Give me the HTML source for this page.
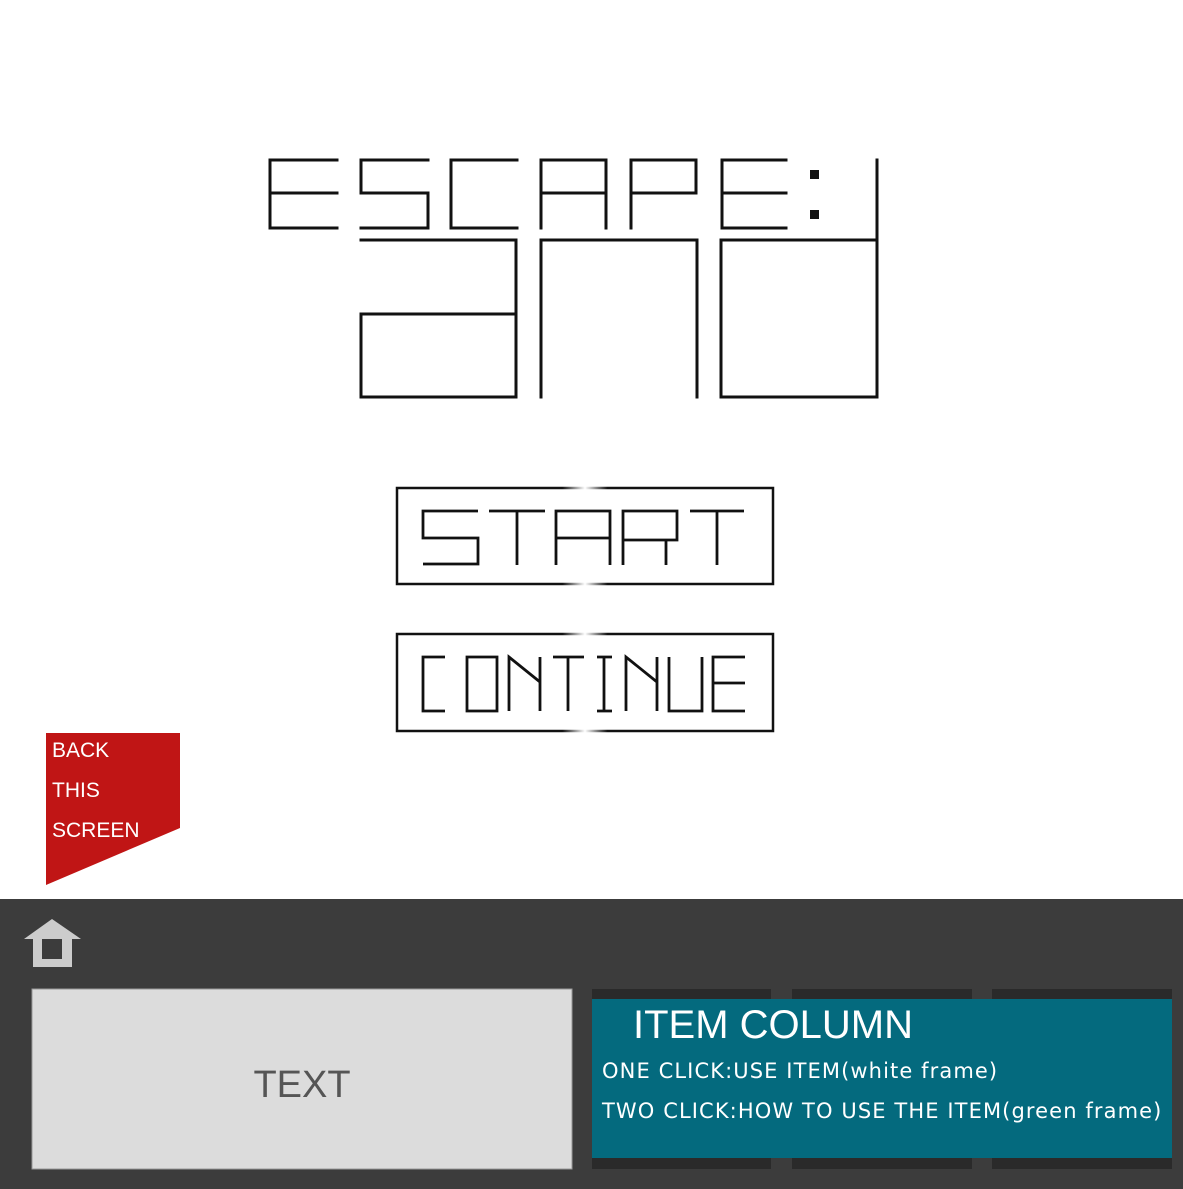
<!DOCTYPE html>
<html><head><meta charset="utf-8"><style>
html,body{margin:0;padding:0;width:1183px;height:1189px;overflow:hidden;background:#fff;font-family:"Liberation Sans","DejaVu Sans",sans-serif}
.abs{position:absolute}
</style></head><body>
<svg class="abs" style="left:0;top:0" width="1183" height="1189" viewBox="0 0 1183 1189">
<defs>
<linearGradient id="sh" x1="0" x2="1" y1="0" y2="0">
<stop offset="0" stop-color="#111"/><stop offset="0.44" stop-color="#111"/><stop offset="0.5" stop-color="#fff"/><stop offset="0.56" stop-color="#111"/><stop offset="1" stop-color="#111"/>
</linearGradient>
</defs>
<g fill="none" stroke="#111" stroke-width="3" stroke-linecap="square">
<path d="M337 160H270V228H337M270 193H337"/>
<path d="M428 160H361V193H428V228H361"/>
<path d="M517 160H451V228H517"/>
<path d="M541 228V160H606V228M541 193H606"/>
<path d="M631 228V160H696V193H631"/>
<path d="M786 160H722V228H786M722 193H786"/>
<path d="M877 160V397"/>
<path d="M361 240H516V397H361V314H516"/>
<path d="M541 397V240H697V397"/>
<path d="M721 240H877M721 240V397H877"/>
</g>
<rect x="810" y="170" width="9" height="9" fill="#111"/>
<rect x="810" y="210" width="9" height="9" fill="#111"/>
<rect x="397" y="488" width="376" height="96" fill="none" stroke="url(#sh)" stroke-width="2.5"/>
<rect x="397" y="634" width="376" height="97" fill="none" stroke="url(#sh)" stroke-width="2.5"/>
<g fill="none" stroke="#111" stroke-width="2.8">
<path d="M478 511H423V538H478V564H423"/>
<path d="M489 511H545M517 511V565"/>
<path d="M556 565V511H610V565M556 538H610"/>
<path d="M623 565V511H677V540H623M666 540V565"/>
<path d="M690 511H744M717 511V565"/>
<path d="M445 657H423V711H445"/>
<path d="M467 657H497V711H467Z"/>
<path d="M509 711V657L540 682M540 657V711"/>
<path d="M553 657H584M568 657V711"/>
<path d="M597 657H612M604 657V711M597 711H612"/>
<path d="M626 711V657L657 682M657 657V711"/>
<path d="M669 657V711H702V657"/>
<path d="M745 657H713V711H745M713 683H745"/>
</g>
<polygon points="46,733 180,733 180,828 46,885" fill="#c01515"/>
<rect x="0" y="899" width="1183" height="290" fill="#3c3c3c"/>
<g fill="#cccccc">
<polygon points="24,939 52,919 81,939"/>
<rect x="33" y="938" width="39" height="29"/>
</g>
<rect x="42" y="939" width="20" height="20" fill="#3c3c3c"/>
<rect x="32" y="989" width="540" height="180" fill="#dcdcdc" stroke="#999" stroke-width="1"/>
<rect x="592" y="989" width="179" height="180" fill="#2a2a2a"/>
<rect x="792" y="989" width="180" height="180" fill="#2a2a2a"/>
<rect x="992" y="989" width="180" height="180" fill="#2a2a2a"/>
<rect x="592" y="999" width="580" height="159" fill="#046a7e"/>
</svg>
<div class="abs" style="left:52px;top:731px;color:#fff;font-size:21px;line-height:40px">BACK<br>THIS<br>SCREEN</div>
<div class="abs" style="left:32px;top:1062px;width:540px;text-align:center;color:#555;font-size:38px;line-height:46px">TEXT</div>
<div class="abs" style="left:633px;top:1002px;color:#fff;font-size:40px;line-height:46px">ITEM COLUMN</div>
<div class="abs" style="left:602px;top:1051px;color:#fff;font-family:'DejaVu Sans',sans-serif;font-size:21px;line-height:40px;white-space:nowrap;letter-spacing:1.1px">ONE CLICK:USE ITEM(white frame)<br>TWO CLICK:HOW TO USE THE ITEM(green frame)</div>
</body></html>
